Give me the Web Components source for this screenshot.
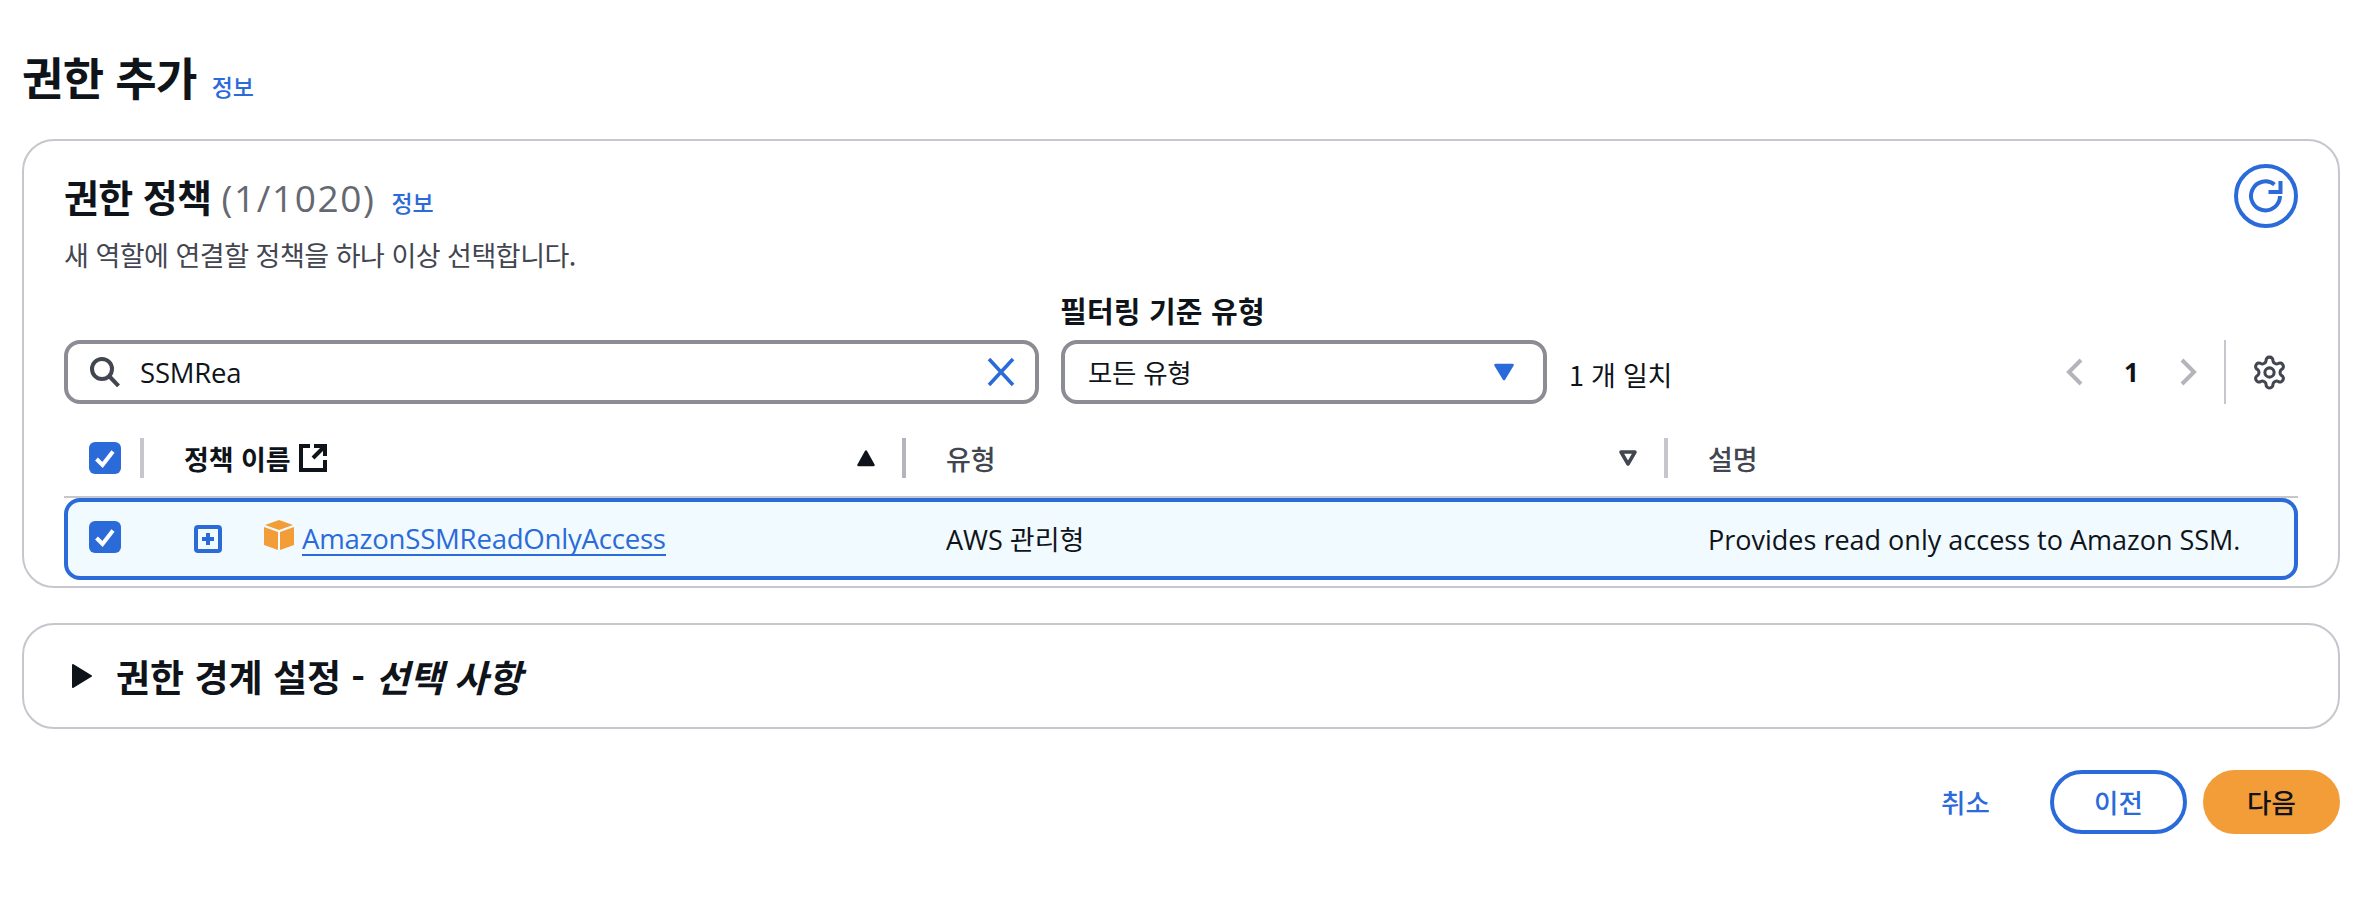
<!DOCTYPE html>
<html lang="ko">
<head>
<meta charset="utf-8">
<title>권한 추가</title>
<style>
  html, body { margin: 0; background: #fff; }
  body { font-family: "Open Sans", "Noto Sans CJK KR", sans-serif; color: #0f141a; font-size: 26px; }
</style>
</head>
<body>
<perm-page></perm-page>
<script>
const FONT = '"Open Sans", "Noto Sans CJK KR", sans-serif';
const KR = '"Noto Sans CJK KR", sans-serif';
const BLUE = '#2b6bd9';

function def(name, css, html) {
  customElements.define(name, class extends HTMLElement {
    constructor() {
      super();
      const root = this.attachShadow({ mode: 'open' });
      root.innerHTML = `<style>${css}</style>${html}`;
    }
  });
}

def('info-link', `
  :host { display: inline-block; font: 500 23px/1 ${KR}; color: ${BLUE}; letter-spacing: -.2px; }
`, `<slot></slot>`);

def('check-box', `
  :host { display: block; width: 32px; height: 32px; }
  svg { display: block; }
`, `<svg width="32" height="32" viewBox="0 0 32 32"><rect width="32" height="32" rx="6" fill="${BLUE}"/><path d="M7.5 17l6 6L24 9.5" fill="none" stroke="#fff" stroke-width="4"/></svg>`);

def('push-button', `
  :host { display: inline-flex; align-items: center; justify-content: center; box-sizing: border-box; width: 137px; height: 64px; border-radius: 32px; font: 500 26.5px/1 ${KR}; color: ${BLUE}; border: 4px solid ${BLUE}; background: #fff; }
  :host([primary]) { background: #f29d38; border-color: #f29d38; color: #0f141a; }
  :host([plain]) { border-color: transparent; background: transparent; }
`, `<slot></slot>`);

def('refresh-button', `
  :host { display: block; width: 64px; height: 64px; flex: none; }
  svg { display: block; }
`, `<svg width="64" height="64" viewBox="0 0 64 64" fill="none" stroke="${BLUE}" stroke-width="4"><circle cx="32" cy="32" r="30"/><path d="M46 32a14.500 14.500 0 1 1-5.500-11.500"/><path d="M46.500 17v11h-12" /></svg>`);

def('search-input', `
  :host { display: flex; align-items: center; box-sizing: border-box; width: 975px; height: 64px; border: 4px solid #8c8c94; border-radius: 16px; padding: 0 20px 0 22px; background: #fff; }
  .t { flex: 1; margin-left: 20px; font: 400 27.5px/34px ${FONT}; letter-spacing: -.2px; padding-top: 2px; }
  svg { display: block; flex: none; }
`, `<svg width="30" height="30" viewBox="0 0 30 30" fill="none" stroke="#424650" stroke-width="4"><circle cx="12" cy="12" r="10"/><path d="M19.500 19.500l9 9.500"/></svg>
<span class="t"><slot></slot></span>
<svg width="28" height="28" viewBox="0 0 28 28" fill="none" stroke="${BLUE}" stroke-width="3.600"><path d="M2 1l24 26M26 1L2 27"/></svg>`);

def('select-field', `
  :host { display: block; width: 486px; }
  .label { font: 700 29px/1 ${KR}; margin-bottom: 15px; letter-spacing: .2px; margin-left: -1px; }
  .box { display: flex; align-items: center; box-sizing: border-box; height: 64px; border: 4px solid #8c8c94; border-radius: 16px; padding: 0 28px 0 23px; }
  .v { flex: 1; font: 400 26.5px/1 ${KR}; letter-spacing: -.3px; }
  svg { display: block; }
`, `<div class="label"><slot name="label"></slot></div>
<div class="box"><span class="v"><slot></slot></span><svg width="22" height="18" viewBox="0 0 22 18"><path d="M2.500 2h17l-8.500 14z" fill="${BLUE}" stroke="${BLUE}" stroke-width="2.500" stroke-linejoin="round"/></svg></div>`);

def('page-nav', `
  :host { display: flex; align-items: center; height: 64px; margin-left: auto; padding-right: 10px; }
  .n { font: 700 26px/1 ${FONT}; width: 95px; text-align: center; }
  .sep { width: 2px; height: 64px; background: #c6c6cd; margin: 0 25px 0 27px; }
  svg { display: block; }
`, `<svg width="18" height="28" viewBox="0 0 18 28" fill="none" stroke="#b4b4bb" stroke-width="4"><path d="M15 2L3 14l12 12"/></svg>
<span class="n"><slot></slot></span>
<svg width="18" height="28" viewBox="0 0 18 28" fill="none" stroke="#b4b4bb" stroke-width="4"><path d="M3 2l12 12L3 26"/></svg>
<span class="sep"></span>
<svg width="37" height="37" viewBox="0 0 24 24" fill="none" stroke="#424650" stroke-width="2" stroke-linejoin="round"><path d="M12.220 2h-.44a2 2 0 0 0-2 2v.18a2 2 0 0 1-1 1.730l-.43.25a2 2 0 0 1-2 0l-.15-.08a2 2 0 0 0-2.730.73l-.22.38a2 2 0 0 0 .73 2.730l.15.1a2 2 0 0 1 1 1.720v.51a2 2 0 0 1-1 1.740l-.15.09a2 2 0 0 0-.73 2.730l.22.38a2 2 0 0 0 2.730.73l.15-.08a2 2 0 0 1 2 0l.43.25a2 2 0 0 1 1 1.730V20a2 2 0 0 0 2 2h.44a2 2 0 0 0 2-2v-.18a2 2 0 0 1 1-1.730l.43-.25a2 2 0 0 1 2 0l.15.08a2 2 0 0 0 2.730-.73l.22-.39a2 2 0 0 0-.73-2.730l-.15-.08a2 2 0 0 1-1-1.740v-.5a2 2 0 0 1 1-1.740l.15-.09a2 2 0 0 0 .73-2.730l-.22-.38a2 2 0 0 0-2.730-.73l-.15.08a2 2 0 0 1-2 0l-.43-.25a2 2 0 0 1-1-1.730V4a2 2 0 0 0-2-2z"/><circle cx="12" cy="12" r="3"/></svg>`);

def('header-cell', `
  :host { display: flex; align-items: center; box-sizing: border-box; height: 40px; padding-left: 40px; padding-right: 26px; border-right: 4px solid #c6c6cd; font: 500 27px/1 ${KR}; color: #424650; letter-spacing: -.1px; }
  :host([active]) { color: #0f141a; font-weight: 700; border-right-color: #b4b4bb; }
  :host([last]) { border-right: 0; }
  .lbl { flex: 1; display: flex; align-items: center; gap: 9px; }
  svg { display: block; }
`, `<span class="lbl"><slot></slot></span><slot name="sort"></slot>`);

def('sort-icon', `
  :host { display: block; width: 20px; height: 18px; }
  svg { display: block; }
`, `<svg width="20" height="18" viewBox="0 0 20 18"><path d="M10 2.500l7.500 13.500H2.500z" fill="#0f141a" stroke="#0f141a" stroke-width="2.500" stroke-linejoin="round"/></svg>`);

def('sort-icon-off', `
  :host { display: block; width: 20px; height: 18px; }
  svg { display: block; }
`, `<svg width="20" height="18" viewBox="0 0 20 18"><path d="M3 3h14L10 15z" fill="none" stroke="#424650" stroke-width="3.500" stroke-linejoin="round"/></svg>`);

def('external-icon', `
  :host { display: inline-block; width: 28px; height: 28px; }
  svg { display: block; }
`, `<svg width="28" height="28" viewBox="0 0 28 28" fill="none" stroke="#0f141a" stroke-width="4"><path d="M11 2H2v24h24v-10"/><path d="M14 14L25 3M15 2h11v10"/></svg>`);

def('policy-table', `
  :host { display: block; margin-top: 32px; }
  .head { display: grid; grid-template-columns: 80px 762px 762px 1fr; align-items: start; height: 62px; box-sizing: border-box; border-bottom: 2px solid #c6c6cd; padding-top: 2px; }
  .c0 { box-sizing: border-box; height: 40px; padding-left: 25px; border-right: 4px solid #c6c6cd; display: flex; align-items: center; }
  .row { display: grid; grid-template-columns: 76px 762px 762px 1fr; align-items: center; box-sizing: border-box; height: 82px; border: 4px solid ${BLUE}; border-radius: 16px; background: #f1faff; font: 400 27px/1 ${FONT}; position: relative; z-index: 1; }
  .r0 { padding-left: 21px; position: relative; top: -2px; }
  .r1 { display: flex; align-items: center; padding-left: 50px; }
  .r2, .r3 { padding-left: 40px; }
  .exp { display: block; margin-right: 42px; }
  .cube { display: block; margin-right: 8px; position: relative; top: -4px; }
  a { color: ${BLUE}; text-decoration: none; border-bottom: 2px solid ${BLUE}; font: 400 27.6px/32px ${FONT}; letter-spacing: -.25px; }
`, `<div class="head">
  <div class="c0"><slot name="check-all"></slot></div>
  <slot name="h1"></slot><slot name="h2"></slot><slot name="h3"></slot>
</div>
<div class="row">
  <div class="r0"><slot name="check"></slot></div>
  <div class="r1">
    <svg class="exp" width="28" height="28" viewBox="0 0 28 28" fill="none"><rect x="2" y="2" width="24" height="24" rx="2" stroke="${BLUE}" stroke-width="4"/><path d="M14 8v12M8 14h12" stroke="${BLUE}" stroke-width="4"/></svg>
    <svg class="cube" width="30" height="30" viewBox="0 0 30 30" fill="#f29d38"><path d="M15 0l14 5-14 5L1 5z"/><path d="M0 7l14 5v18L0 25z"/><path d="M30 7l-14 5v18l14-5z"/></svg>
    <a><slot name="name"></slot></a>
  </div>
  <div class="r2"><slot name="type"></slot></div>
  <div class="r3"><slot name="desc"></slot></div>
</div>`);

def('policy-card', `
  :host { display: block; box-sizing: border-box; border: 2px solid #c6c6cd; border-radius: 32px; background: #fff; padding: 23px 40px 6px 40px; }
  .top { display: flex; justify-content: space-between; align-items: flex-start; height: 132px; }
  h2 { margin: 14px 0 0; font: 700 38px/36px ${KR}; letter-spacing: -.6px; display: flex; align-items: baseline; gap: 16px; }
  h2 .cnt { color: #656871; font: 400 37px/36px ${FONT}; letter-spacing: 1.6px; margin-left: 0; }
  p { margin: 25px 0 0; font: 400 27px/28px ${KR}; color: #424650; letter-spacing: -.5px; }
  .bar { display: flex; align-items: flex-end; }
  .bar ::slotted(select-field) { margin-left: 22px; }
  .count { height: 64px; font: 400 27px/70px ${KR}; margin-left: 22px; letter-spacing: -.25px; color: #0f141a; }
`, `<div class="top">
  <div>
    <h2><span><slot name="title"></slot> <span class="cnt"><slot name="count"></slot></span></span><slot name="info"></slot></h2>
    <p><slot name="desc"></slot></p>
  </div>
  <slot name="refresh"></slot>
</div>
<div class="bar">
  <slot name="search"></slot><slot name="select"></slot>
  <span class="count"><slot name="matches"></slot></span>
  <slot name="pager"></slot>
</div>
<slot name="table"></slot>`);

def('boundary-card', `
  :host { display: flex; align-items: center; box-sizing: border-box; height: 106px; margin-top: 35px; border: 2px solid #c6c6cd; border-radius: 32px; padding-left: 47px; background: #fff; }
  svg { display: block; margin-right: 23px; }
  .t { font: 700 37px/1 ${KR}; letter-spacing: 0; }
  em { font-style: italic; }
`, `<svg width="22" height="26" viewBox="0 0 22 26"><path d="M2 2l18 11L2 24z" fill="#0f141a" stroke="#0f141a" stroke-width="2" stroke-linejoin="round"/></svg>
<span class="t"><slot></slot> - <em><slot name="opt"></slot></em></span>`);

def('perm-page', `
  :host { display: block; box-sizing: border-box; height: 906px; padding: 51px 32px 0 22px; font-family: ${FONT}; color: #0f141a; }
  header { display: flex; align-items: baseline; gap: 15px; height: 88px; }
  h1 { margin: 0; font: 700 45px/52px ${KR}; letter-spacing: -.7px; }
  footer { display: flex; justify-content: flex-end; align-items: center; gap: 16px; margin-top: 41px; }
`, `<header><h1>권한 추가</h1><info-link>정보</info-link></header>
<policy-card>
  <span slot="title">권한 정책</span><span slot="count">(1/1020)</span>
  <info-link slot="info">정보</info-link>
  <span slot="desc">새 역할에 연결할 정책을 하나 이상 선택합니다.</span>
  <refresh-button slot="refresh"></refresh-button>
  <search-input slot="search">SSMRea</search-input>
  <select-field slot="select"><span slot="label">필터링 기준 유형</span>모든 유형</select-field>
  <span slot="matches">1 개 일치</span>
  <page-nav slot="pager">1</page-nav>
  <policy-table slot="table">
    <check-box slot="check-all"></check-box>
    <header-cell slot="h1" active>정책 이름 <external-icon></external-icon><sort-icon slot="sort"></sort-icon></header-cell>
    <header-cell slot="h2">유형<sort-icon-off slot="sort"></sort-icon-off></header-cell>
    <header-cell slot="h3" last>설명</header-cell>
    <check-box slot="check"></check-box>
    <span slot="name">AmazonSSMReadOnlyAccess</span>
    <span slot="type">AWS 관리형</span>
    <span slot="desc">Provides read only access to Amazon SSM.</span>
  </policy-table>
</policy-card>
<boundary-card>권한 경계 설정<span slot="opt">선택 사항</span></boundary-card>
<footer>
  <push-button plain>취소</push-button>
  <push-button>이전</push-button>
  <push-button primary>다음</push-button>
</footer>`);
</script>
</body>
</html>
